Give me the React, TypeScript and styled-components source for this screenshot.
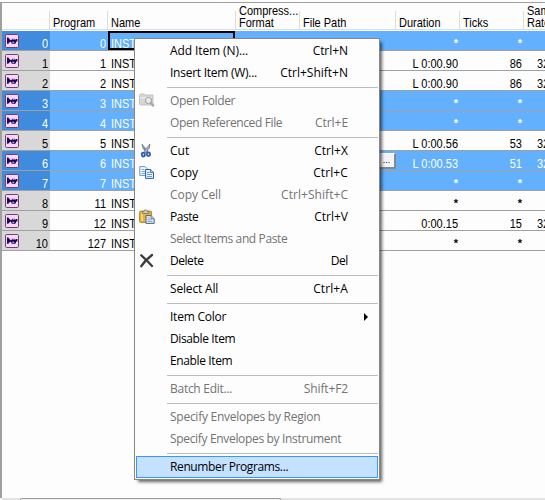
import React from "react";
import styled, { createGlobalStyle, css } from "styled-components";

const GlobalStyle = createGlobalStyle`
  body { margin: 0; overflow: hidden; background: #fdfdfd; }
  * { box-sizing: border-box; }
`;

const COLUMNS = "47px 58px 128px 64px 96px 64px 64px 22px";

const Window = styled.div`
  position: relative;
  width: 545px;
  height: 500px;
  overflow: hidden;
  background: #fdfdfd;
  font-family: "Liberation Sans", Arial, sans-serif;
  color: #000;
  display: flex;
  flex-direction: column;
  padding-top: 2px;
`;

const Panel = styled.div`
  flex: 1;
  display: flex;
  flex-direction: column;
  border-left: 2px solid #a0a0a0;
  border-top: 1px solid #a0a0a0;
`;

const Header = styled.div`
  display: grid;
  grid-template-columns: ${COLUMNS};
  height: 28px;
  padding-bottom: 1px;
  background: linear-gradient(#dcdcdc, #dcdcdc) 0 26px / 100% 1px no-repeat;
`;

const HeaderCell = styled.div<{ $divider?: boolean }>`
  display: flex;
  flex-direction: column;
  justify-content: flex-end;
  padding: 0 0 0 4px;
  height: 26px;
  background: ${(p) => (p.$divider ? "linear-gradient(#dcdcdc, #dcdcdc) 0 8px / 1px 18px no-repeat" : "none")};
`;

const Label = styled.span`
  display: block;
  height: 12px;
  font-size: 11px;
  line-height: 12px;
  white-space: nowrap;
  transform: scaleY(1.1);
  transform-origin: 0 10px;
`;

const Star = styled.span`
  display: block;
  height: 12px;
  margin-top: -1px;
  font-size: 11px;
  font-weight: bold;
  line-height: 12px;
`;

const Row = styled.div<{ $selected: boolean }>`
  display: grid;
  grid-template-columns: ${COLUMNS};
  height: 20px;
  background: ${(p) => (p.$selected ? "#63b0ff" : "#fdfdfd")};
  color: ${(p) => (p.$selected ? "#fff" : "#000")};
  background-clip: padding-box;
  border-bottom: 1px solid #a0a0a0;
`;

const IndexCell = styled.div<{ $selected: boolean }>`
  display: flex;
  justify-content: space-between;
  width: 48px;
  padding: 3px 2px 0 3px;
  height: 19px;
  background: ${(p) => (p.$selected ? "#3f8cde" : "#d8d8d8")};
  ${Label} { margin-top: 4px; }
`;

const Cell = styled.div<{ $end?: boolean; $focused?: boolean }>`
  display: flex;
  justify-content: ${(p) => (p.$end ? "flex-end" : "flex-start")};
  padding: 7px 1px 0 4px;
  height: 19px;
  ${(p) =>
    p.$focused &&
    css`
      margin-left: 1px;
      padding: 5px 0 0 1px;
      border: 2px solid #000;
    `}
`;

const RateCell = styled(Cell)`
  padding-left: 14px;
`;

const BrowseCell = styled.div`
  display: flex;
  justify-content: flex-end;
  padding-top: 2px;
  margin-right: -1px;
`;

const BrowseButton = styled.span`
  width: 18px;
  height: 16px;
  border: 1px solid #fff;
  border-right: 2px solid #888;
  border-bottom: 2px solid #888;
  background: #f4f4f4;
  color: #000;
  font-size: 9px;
  line-height: 13px;
  text-align: center;
`;

const ScrollBar = styled.div`
  display: flex;
  height: 2px;
  margin-left: 2px;
  background: #e3e3e3;
`;

const ScrollThumb = styled.div`
  width: 261px;
  margin-left: 18px;
  border: 1px solid #999;
  border-bottom: 0;
  border-radius: 2px 2px 0 0;
  background: #f4f4f4;
`;

const Menu = styled.div`
  position: absolute;
  left: 134px;
  top: 38px;
  width: 246px;
  padding: 1px;
  border: 1px solid #868686;
  background: #fdfdfd;
  box-shadow: 3px 3px 3px -1px rgba(0, 0, 0, 0.6);
  font: 12px "Open Sans", "Segoe UI", sans-serif;
`;

const IconSlot = styled.span`
  width: 31px;
  padding-top: 3px;
  svg { display: block; }
`;

const MenuText = styled.span<{ $track: number }>`
  line-height: 22px;
  white-space: nowrap;
  letter-spacing: ${(p) => p.$track}px;
`;

const MenuRow = styled.div<{ $disabled?: boolean; $active?: boolean }>`
  display: flex;
  height: 22px;
  padding-left: 3px;
  padding-right: 30px;
  color: ${(p) => (p.$disabled ? "#737373" : "#000")};
  ${(p) =>
    p.$active &&
    css`
      padding-left: 2px;
      border: 1px solid #3399ff;
      background: #c4e1ff;
      ${MenuText} { line-height: 20px; }
    `}
`;

const Shortcut = styled(MenuText)`
  margin-left: auto;
`;

const SubmenuArrow = styled.span`
  width: 0;
  height: 0;
  margin: 7px -20px 0 auto;
  border: 4px solid transparent;
  border-left-color: #000;
  border-right-width: 0;
`;

const Separator = styled.div`
  height: 6px;
  margin-left: 31px;
  background: linear-gradient(#bdbdbd, #bdbdbd) 0 3px / 100% 1px no-repeat;
`;

const InstrumentIcon = () => (
  <svg width="14" height="14" viewBox="0 0 14 14">
    <rect x=".5" y=".5" width="13" height="13" rx="1.2" fill="#fbd5fc" stroke="#70406c" />
    <path d="M2 3.6h1.2L5.4 6h1.4V4.8h1V6h.8V4.8h1V6h.9V5h1.9v2.4h-1.1l-.9 2.4H6.8L5.9 7.8h-.7L3.2 9.8H2z" fill="#1c0b52" />
    <path d="M7.3 7.8h1.9v1H7.3z" fill="#fbd5fc" />
  </svg>
);

const FolderIcon = () => (
  <svg width="16" height="16" viewBox="0 0 16 16">
    <path d="M.5 2.5 1.5 1H5l1.5 1H14v10H1.5L.5 11z" fill="#d5d5d5" stroke="#c3c3c3" />
    <path d="M1.5 4H13v1.5H1.5z" fill="#ebebeb" />
    <circle cx="9.5" cy="7.5" r="3" fill="#ededed" stroke="#a9a9a9" strokeWidth="1.2" />
    <path d="m11.8 10 3 3.2" stroke="#a5a5a5" strokeWidth="2.2" />
  </svg>
);

const CutIcon = () => (
  <svg width="16" height="16" viewBox="0 0 16 16">
    <path d="M3 1 3.8 5l3.6 4.8L9 8.6z" fill="#8795a8" stroke="#65748a" strokeWidth=".6" />
    <path d="M10.9 1 10.4 5 6.8 9.8 5.3 8.1z" fill="#a9b5c4" stroke="#5f6e83" strokeWidth=".7" />
    <ellipse cx="4.3" cy="11.6" rx="1.6" ry="2" fill="#c9d8f0" stroke="#315cab" strokeWidth="1.7" />
    <ellipse cx="9.5" cy="11.2" rx="1.6" ry="1.8" fill="#c9d8f0" stroke="#315cab" strokeWidth="1.7" />
  </svg>
);

const CopyIcon = () => (
  <svg width="16" height="16" viewBox="0 0 16 16">
    <path d="M.8 1.6h5.4l2.5 2.5v6.3H.8z" fill="#f4f9ff" stroke="#6d90c7" />
    <path d="M2.5 4.5h3M2.5 6.5h4M2.5 8.5h4" stroke="#7ba8df" />
    <path d="M6.6 4.5h5l2.9 2.9v6H6.6z" fill="#e8f3ff" stroke="#305c9f" />
    <path d="M11.4 4.5v3h3" fill="#b8d2f1" stroke="#305c9f" strokeWidth=".8" />
    <path d="M8 7.5h2.5M8 9.5h5M8 11.5h5" stroke="#699ee0" />
  </svg>
);

const PasteIcon = () => (
  <svg width="16" height="16" viewBox="0 0 16 16">
    <rect x=".6" y="2.1" width="12" height="11.3" rx="1" fill="#e5b33c" stroke="#b8862b" />
    <path d="M2 3.5h2V12H2z" fill="#f5d477" />
    <path d="M3.3 4.4V2.6h1.5L5.5 1h2.2l.8 1.6H10v1.8z" fill="#d4d0bc" stroke="#77705d" strokeWidth=".8" />
    <path d="M7 6.6h5l3.2 3.2v4.6H7z" fill="#e9eef5" stroke="#52657f" />
    <path d="M12 6.6v3h3" fill="#bccada" stroke="#52657f" strokeWidth=".7" />
    <path d="M8.5 9h2.2M8.5 10.8h5M8.5 12.6h5" stroke="#8ea6c1" />
  </svg>
);

const DeleteIcon = () => (
  <svg width="16" height="16" viewBox="0 0 16 16">
    <path d="M2.3 2.3C5.5 5 9.5 9 13 13M13 2C9 5 4.8 9.2 2.3 13.2" fill="none" stroke="#3d3d3d" strokeWidth="2.3" strokeLinecap="round" />
  </svg>
);

type Instrument = { program: number; selected?: boolean; focused?: boolean; browse?: boolean; duration?: string; ticks?: string; rate?: string };

const instruments: Instrument[] = [
  { program: 0, selected: true, focused: true },
  { program: 1, duration: "L 0:00.90", ticks: "86", rate: "32" },
  { program: 2, duration: "L 0:00.90", ticks: "86", rate: "32" },
  { program: 3, selected: true },
  { program: 4, selected: true },
  { program: 5, duration: "L 0:00.56", ticks: "53", rate: "32" },
  { program: 6, selected: true, browse: true, duration: "L 0:00.53", ticks: "51", rate: "32" },
  { program: 7, selected: true },
  { program: 11 },
  { program: 12, duration: "0:00.15", ticks: "15", rate: "32" },
  { program: 127 },
];

const headings: string[][] = [[], ["Program"], ["Name"], ["Compress...", "Format"], ["File Path"], ["Duration"], ["Ticks"], ["Sam", "Rate"]];

type Entry = { label: string; track: number; keys?: string; keyTrack?: number; icon?: React.ReactNode; disabled?: boolean; submenu?: boolean; active?: boolean };

const groups: Entry[][] = [
  [
    { label: "Add Item (N)...", track: -0.1, keys: "Ctrl+N", keyTrack: -0.05 },
    { label: "Insert Item (W)...", track: -0.26, keys: "Ctrl+Shift+N", keyTrack: 0 },
  ],
  [
    { label: "Open Folder", track: -0.39, icon: <FolderIcon />, disabled: true },
    { label: "Open Referenced File", track: -0.38, keys: "Ctrl+E", keyTrack: -0.05, disabled: true },
  ],
  [
    { label: "Cut", track: 0, keys: "Ctrl+X", keyTrack: 0.05, icon: <CutIcon /> },
    { label: "Copy", track: 0, keys: "Ctrl+C", keyTrack: 0.1, icon: <CopyIcon /> },
    { label: "Copy Cell", track: -0.07, keys: "Ctrl+Shift+C", keyTrack: 0.05, disabled: true },
    { label: "Paste", track: -0.45, keys: "Ctrl+V", keyTrack: 0, icon: <PasteIcon /> },
    { label: "Select Items and Paste", track: -0.38, disabled: true },
    { label: "Delete", track: -0.45, keys: "Del", keyTrack: -0.4, icon: <DeleteIcon /> },
  ],
  [{ label: "Select All", track: -0.17, keys: "Ctrl+A", keyTrack: 0.1 }],
  [
    { label: "Item Color", track: -0.23, submenu: true },
    { label: "Disable Item", track: -0.38 },
    { label: "Enable Item", track: -0.38 },
  ],
  [{ label: "Batch Edit...", track: -0.27, keys: "Shift+F2", keyTrack: -0.13, disabled: true }],
  [
    { label: "Specify Envelopes by Region", track: -0.26, disabled: true },
    { label: "Specify Envelopes by Instrument", track: -0.33, disabled: true },
  ],
  [{ label: "Renumber Programs...", track: -0.38, active: true }],
];

const ValueCell = ({ value }: { value?: string }) => (
  <Cell $end>{value ? <Label>{value}</Label> : <Star>*</Star>}</Cell>
);

const InstrumentRow = ({ item, index }: { item: Instrument; index: number }) => {
  const selected = !!item.selected;
  return (
    <Row $selected={selected}>
      <IndexCell $selected={selected}>
        <InstrumentIcon />
        <Label>{index}</Label>
      </IndexCell>
      <Cell $end><Label>{item.program}</Label></Cell>
      <Cell $focused={item.focused}><Label>INST</Label></Cell>
      <Cell />
      {item.browse ? <BrowseCell><BrowseButton>...</BrowseButton></BrowseCell> : <Cell />}
      <ValueCell value={item.duration} />
      <ValueCell value={item.ticks} />
      <RateCell>{item.rate && <Label>{item.rate}</Label>}</RateCell>
    </Row>
  );
};

const MenuEntry = ({ entry }: { entry: Entry }) => (
  <MenuRow $disabled={entry.disabled} $active={entry.active}>
    <IconSlot>{entry.icon}</IconSlot>
    <MenuText $track={entry.track}>{entry.label}</MenuText>
    {entry.keys && <Shortcut $track={entry.keyTrack ?? 0}>{entry.keys}</Shortcut>}
    {entry.submenu && <SubmenuArrow />}
  </MenuRow>
);

export default function App() {
  return (
    <>
      <GlobalStyle />
      <Window>
        <Panel>
          <Header>
            {headings.map((lines, i) => (
              <HeaderCell key={i} $divider={i > 0}>
                {lines.map((line) => <Label key={line}>{line}</Label>)}
              </HeaderCell>
            ))}
          </Header>
          {instruments.map((item, i) => <InstrumentRow key={i} item={item} index={i} />)}
        </Panel>
        <ScrollBar><ScrollThumb /></ScrollBar>
        <Menu>
          {groups.map((entries, i) => (
            <React.Fragment key={i}>
              {i > 0 && <Separator />}
              {entries.map((entry) => <MenuEntry key={entry.label} entry={entry} />)}
            </React.Fragment>
          ))}
        </Menu>
      </Window>
    </>
  );
}
